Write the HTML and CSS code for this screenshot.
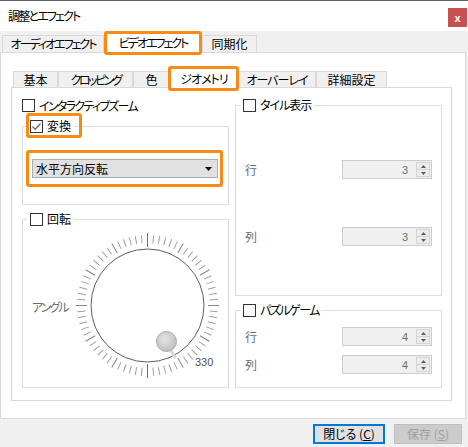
FILE: index.html
```html
<!DOCTYPE html>
<html lang="ja">
<head>
<meta charset="utf-8">
<title>調整とエフェクト</title>
<link rel="stylesheet" href="styles.css">
</head>
<body>
<div class="window">
  <div class="titlebar">
    <span class="title">調整とエフェクト</span>
    <span class="close">x</span>
  </div>

  <div class="tabs outer-tabs">
    <div class="tab w-audio"><span class="ls2">オーディオエフェクト</span></div>
    <div class="tab active w-video"><span class="ls2">ビデオエフェクト</span></div>
    <div class="tab w-sync">同期化</div>
  </div>

  <div class="outer-panel">
    <div class="tabs inner-tabs">
      <div class="tab w-basic">基本</div>
      <div class="tab w-crop"><span class="ls25">クロッピング</span></div>
      <div class="tab w-color">色</div>
      <div class="tab active w-geo"><span class="ls1">ジオメトリ</span></div>
      <div class="tab w-overlay"><span class="ls1">オーバーレイ</span></div>
      <div class="tab w-adv">詳細設定</div>
    </div>

    <div class="inner-panel">
      <div class="col">
        <div class="check-row"><span class="cb"></span><span class="ls17">インタラクティブズーム</span></div>

        <fieldset class="group g-transform">
          <legend><span class="cb"><svg width="11" height="11" viewBox="0 0 11 11"><polyline points="1.5,5.5 4.2,8.3 9.5,2.5" fill="none" stroke="#6a6a6a" stroke-width="1.3"/></svg></span><span>変換</span></legend>
          <div class="select"><span>水平方向反転</span><svg class="arrow" width="7" height="4" viewBox="0 0 7 4"><polygon points="0,0 7,0 3.5,4" fill="#000"/></svg></div>
        </fieldset>

        <fieldset class="group g-rotate">
          <legend><span class="cb"></span><span>回転</span></legend>
          <div class="dial-row">
            <span class="dim dial-label">アングル</span>
            <svg class="dial" width="150" height="150" viewBox="0 0 150 150">
              <defs>
                <radialGradient id="knob" cx="42%" cy="38%" r="65%">
                  <stop offset="0" stop-color="#e4e4e4"/>
                  <stop offset="1" stop-color="#bdbdbd"/>
                </radialGradient>
                <line id="tk" x1="75.5" y1="5" x2="75.5" y2="13" stroke="#9e9e9e"/>
                <line id="md" x1="75.5" y1="4" x2="75.5" y2="15" stroke="#858585"/>
                <g id="six">
                  <use href="#md"/>
                  <use href="#tk" transform="rotate(5 75.5 75.5)"/>
                  <use href="#tk" transform="rotate(10 75.5 75.5)"/>
                  <use href="#tk" transform="rotate(15 75.5 75.5)"/>
                  <use href="#tk" transform="rotate(20 75.5 75.5)"/>
                  <use href="#tk" transform="rotate(25 75.5 75.5)"/>
                </g>
              </defs>
              <use href="#six"/>
              <use href="#six" transform="rotate(30 75.5 75.5)"/>
              <use href="#six" transform="rotate(60 75.5 75.5)"/>
              <use href="#six" transform="rotate(90 75.5 75.5)"/>
              <use href="#six" transform="rotate(120 75.5 75.5)"/>
              <use href="#six" transform="rotate(150 75.5 75.5)"/>
              <use href="#six" transform="rotate(180 75.5 75.5)"/>
              <use href="#six" transform="rotate(210 75.5 75.5)"/>
              <use href="#six" transform="rotate(240 75.5 75.5)"/>
              <use href="#six" transform="rotate(270 75.5 75.5)"/>
              <use href="#six" transform="rotate(300 75.5 75.5)"/>
              <use href="#six" transform="rotate(330 75.5 75.5)"/>
              <line x1="75.5" y1="3" x2="75.5" y2="17" stroke="#6e6e6e"/>
              <line x1="75.5" y1="134" x2="75.5" y2="148" stroke="#6e6e6e"/>
              <circle cx="75.5" cy="75.5" r="56.5" fill="#fff" stroke="#5e5e5e"/>
              <line x1="98" y1="119" x2="103" y2="127" stroke="#d8d8d8" stroke-width="3" stroke-linecap="round"/>
              <circle cx="94.5" cy="111.5" r="10" fill="url(#knob)" stroke="#ababab"/>
              <text x="123" y="136" class="dial-val">330</text>
            </svg>
          </div>
        </fieldset>
      </div>

      <div class="col right">
        <fieldset class="group g-tile">
          <legend><span class="cb"></span><span class="ls1">タイル表示</span></legend>
          <div class="rows">
            <div class="field-row"><span class="dim">行</span>
              <div class="spinbox"><span class="val">3</span><span class="spin"><span><svg width="5" height="3" viewBox="0 0 5 3"><polygon points="0,3 5,3 2.5,0" fill="#5c5c5c"/></svg></span><span><svg width="5" height="3" viewBox="0 0 5 3"><polygon points="0,0 5,0 2.5,3" fill="#5c5c5c"/></svg></span></span></div>
            </div>
            <div class="field-row"><span class="dim">列</span>
              <div class="spinbox"><span class="val">3</span><span class="spin"><span><svg width="5" height="3" viewBox="0 0 5 3"><polygon points="0,3 5,3 2.5,0" fill="#5c5c5c"/></svg></span><span><svg width="5" height="3" viewBox="0 0 5 3"><polygon points="0,0 5,0 2.5,3" fill="#5c5c5c"/></svg></span></span></div>
            </div>
          </div>
        </fieldset>

        <fieldset class="group g-puzzle">
          <legend><span class="cb"></span><span class="ls15">パズルゲーム</span></legend>
          <div class="rows">
            <div class="field-row"><span class="dim">行</span>
              <div class="spinbox"><span class="val">4</span><span class="spin"><span><svg width="5" height="3" viewBox="0 0 5 3"><polygon points="0,3 5,3 2.5,0" fill="#5c5c5c"/></svg></span><span><svg width="5" height="3" viewBox="0 0 5 3"><polygon points="0,0 5,0 2.5,3" fill="#5c5c5c"/></svg></span></span></div>
            </div>
            <div class="field-row"><span class="dim">列</span>
              <div class="spinbox"><span class="val">4</span><span class="spin"><span><svg width="5" height="3" viewBox="0 0 5 3"><polygon points="0,3 5,3 2.5,0" fill="#5c5c5c"/></svg></span><span><svg width="5" height="3" viewBox="0 0 5 3"><polygon points="0,0 5,0 2.5,3" fill="#5c5c5c"/></svg></span></span></div>
            </div>
          </div>
        </fieldset>
      </div>
    </div>
  </div>

  <div class="buttons">
    <div class="btn btn-close">閉じる (<u>C</u>)</div>
    <div class="btn btn-save">保存 (<u>S</u>)</div>
  </div>

  <div class="hl hl-outer-tab"></div>
  <div class="hl hl-inner-tab"></div>
  <div class="hl hl-check"></div>
  <div class="hl hl-select"></div>
</div>
</body>
</html>
```

FILE: styles.css
```css
* { box-sizing: border-box; }
html, body { margin: 0; padding: 0; }
body {
  width: 468px;
  height: 447px;
  overflow: hidden;
  background: #f0f0f0;
  font-family: "Noto Sans CJK JP", "Noto Sans", sans-serif;
  font-size: 12px;
  color: #000;
  font-feature-settings: "palt";
}
.window { position: relative; width: 468px; height: 447px; }

.ls1 { letter-spacing: -1px; }
.ls15 { letter-spacing: -1.5px; }
.ls17 { letter-spacing: -1.7px; }
.ls2 { letter-spacing: -2px; }
.ls25 { letter-spacing: -2.5px; }

/* title bar */
.titlebar {
  height: 31px;
  background: #fff;
  border-top: 1px solid #5f5f5f;
  display: flex;
  align-items: center;
  padding-left: 8px;
}
.title { line-height: 14px; letter-spacing: -1.8px; }
.close {
  margin-left: auto;
  margin-right: 1px;
  align-self: flex-start;
  margin-top: 7px;
  width: 19px;
  height: 19px;
  background: #c75050;
  color: #fff;
  font: bold 11px "Liberation Sans", sans-serif;
  display: flex;
  align-items: center;
  justify-content: center;
}

/* tabs */
.tabs { display: flex; align-items: flex-end; }
.tab {
  height: 17px;
  border: 1px solid #d9d9d9;
  border-bottom: none;
  background: #f0f0f0;
  display: flex;
  align-items: center;
  justify-content: center;
  line-height: 14px;
  white-space: nowrap;
}
.tab.active {
  background: #fff;
  height: 21px;
  margin-bottom: -1px;
  position: relative;
  z-index: 1;
}
.outer-tabs { height: 21px; padding-left: 2px; }
.w-audio { width: 102px; }
.w-video { width: 98px; }
.w-sync { width: 55px; }

.outer-panel {
  width: 466px;
  height: 367px;
  background: #fff;
  border: 1px solid #d9d9d9;
  padding: 15px 0 0 10px;
}
.inner-tabs { height: 19px; padding-left: 2px; }
.inner-tabs .tab { height: 16px; }
.inner-tabs .tab.active { height: 20px; }
.w-basic { width: 45px; }
.w-crop { width: 75px; }
.w-color { width: 37px; }
.w-geo { width: 68px; }
.w-overlay { width: 78px; }
.w-adv { width: 71px; }

.inner-panel {
  width: 441px;
  height: 314px;
  border: 1px solid #d9d9d9;
  padding: 11px 9px 0 10px;
  display: flex;
  gap: 6px;
}
.col { width: 207px; display: flex; flex-direction: column; gap: 7px; }
.col.right { margin-top: -1px; }

.check-row {
  display: flex;
  align-items: center;
  gap: 4px;
  height: 13px;
  line-height: 13px;
  white-space: nowrap;
}
.cb {
  flex: none;
  width: 13px;
  height: 13px;
  border: 1px solid #333;
  background: #fff;
  display: flex;
  align-items: center;
  justify-content: center;
}

/* group boxes */
.group {
  margin: 0;
  min-width: 0;
  border: 1px solid #dcdcdc;
  padding: 0 10px 0 9px;
}
.group legend {
  display: flex;
  align-items: center;
  gap: 4px;
  height: 14px;
  line-height: 14px;
  padding: 0 3px;
  margin-left: -5px;
  white-space: nowrap;
}
.g-transform { padding-top: 26px; padding-bottom: 26px; }
.g-rotate { padding-top: 4px; padding-bottom: 7px; }
.g-tile { padding: 48px 9px 49px 9px; }
.g-tile .rows { gap: 48px; }
.g-puzzle { padding: 10px 9px 13px 9px; }
.g-puzzle .rows { gap: 9px; }
.rows { display: flex; flex-direction: column; }

.select {
  height: 19px;
  background: #e1e1e1;
  border: 1px solid #adadad;
  display: flex;
  align-items: center;
  padding: 0 5px 0 3px;
  line-height: 14px;
}
.select .arrow { margin-left: auto; }

/* dial */
.dial-row { display: flex; align-items: center; }
.dial-label { width: 40px; flex: none; margin-top: 4px; line-height: 14px; white-space: nowrap; letter-spacing: -2px; }
.dial { display: block; flex: none; }
.dial-val { font: 11px "Liberation Sans", sans-serif; fill: #555; }

.dim { color: #6d6d6d; }
.field-row { display: flex; align-items: center; height: 19px; line-height: 14px; }
.spinbox {
  margin-left: auto;
  width: 90px;
  height: 19px;
  border: 1px solid #cccccc;
  background: #f0f0f0;
  display: flex;
  align-items: center;
  justify-content: flex-end;
  padding-right: 1px;
}
.spinbox .val { margin-right: 8px; color: #6d6d6d; font-family: "Liberation Sans", sans-serif; font-size: 11px; }
.spin {
  width: 14px;
  height: 15px;
  border: 1px solid #d4d4d4;
  background: #ececec;
  display: flex;
  flex-direction: column;
}
.spin > span { flex: 1; display: flex; align-items: center; justify-content: center; }
.spin > span + span { border-top: 1px solid #d4d4d4; }
.spin svg { display: block; }

/* buttons */
.buttons {
  display: flex;
  justify-content: flex-end;
  gap: 9px;
  padding: 5px 6px 0 0;
}
.btn {
  height: 20px;
  display: flex;
  align-items: center;
  justify-content: center;
  line-height: 14px;
  white-space: pre;
}
.btn-close { width: 72px; border: 2px solid #0078d7; background: #e1e1e1; }
.btn-save { width: 68px; border: 1px solid #bfbfbf; background: #cccccc; color: #a0a0a0; }

/* orange annotation outlines */
.hl {
  position: absolute;
  border: 3px solid #fb8a14;
  border-radius: 3px;
  pointer-events: none;
  z-index: 5;
}
.hl-outer-tab { left: 104px; top: 31px; width: 98px; height: 24px; }
.hl-inner-tab { left: 168px; top: 66px; width: 71px; height: 25px; }
.hl-check { left: 26px; top: 113px; width: 56px; height: 25px; }
.hl-select { left: 26px; top: 150px; width: 197px; height: 37px; }
```
